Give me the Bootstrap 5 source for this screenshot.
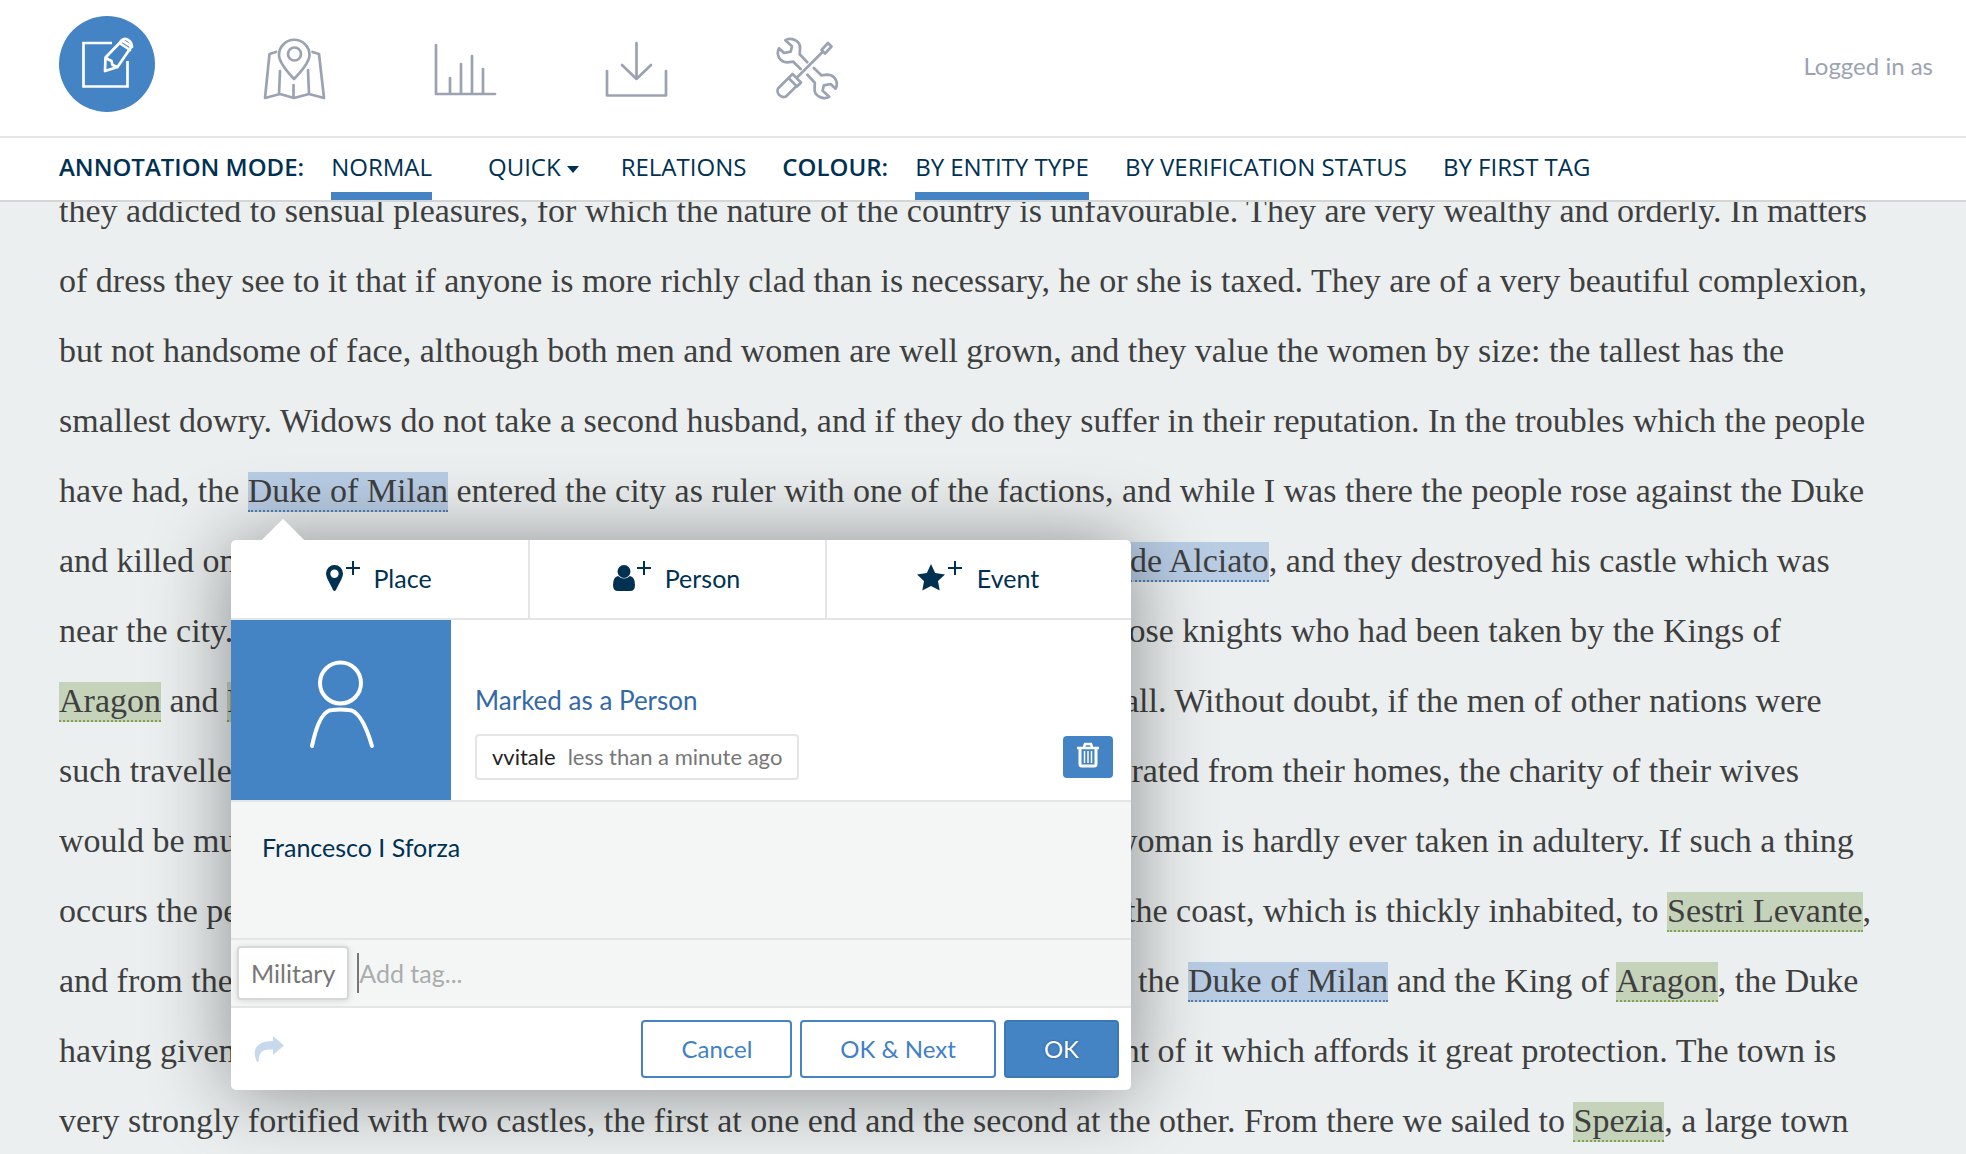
<!DOCTYPE html>
<html lang="en">
<head>
<meta charset="utf-8">
<meta name="viewport" content="width=device-width, initial-scale=1">
<title>Annotation editor</title>
<link href="https://cdn.jsdelivr.net/npm/bootstrap@5.3.0/dist/css/bootstrap.min.css" rel="stylesheet">
<style>
:root{--blue:#4483c4;--navy:#003152;--line:#e4e5e6;--soft:#f4f6f6;--icon:#9ba3b2}
body{font-family:Lato,"Open Sans",sans-serif;font-size:25px;line-height:36px;color:var(--navy)}
.topbar{padding:16px 33px 24px 59px;border-bottom:2px solid var(--line);background:#fff}
.topnav{gap:107px}
.topnav svg{display:block;overflow:visible;width:64px;height:64px;fill:none;stroke:var(--icon);stroke-width:2.7;stroke-linecap:round;stroke-linejoin:round}
.topnav .nav-link{padding:6px 0 0}
.topnav .current{width:96px;height:96px;padding:0;border-radius:50%;background:var(--blue)}
.topnav .current svg{stroke:#fff}
.whoami{color:var(--icon);font-size:24px;padding-top:4px}
.modebar{padding:0 59px;height:64px;border-bottom:2px solid #d4d6d6;background:#fff;font-family:"Open Sans",sans-serif;font-size:24px;line-height:32px}
.modes{gap:36px}
.modebar b{font-weight:600;padding-top:13px;margin-right:27px}
.modebar a,.modebar button{display:block;height:62px;padding:13px 0 17px;border:0;background:none;color:inherit;text-decoration:none;white-space:nowrap}
.modebar a.on{padding-bottom:9px;border-bottom:8px solid var(--blue)}
.modebar .quick{margin:0 6px 0 20px}
.quick::after{content:"";display:inline-block;margin-left:6px;vertical-align:3px;border:6px solid transparent;border-top:7px solid;border-bottom:0}
.reader{background:#ebeff0;color:#3f3f3f;font-family:"Liberation Serif","Times New Roman",serif;font-size:34px;line-height:70px}
.passage{margin:-26px 0 0 59px}
.passage p{margin:0;white-space:nowrap}
.passage p>i{display:inline-block;font-style:normal;overflow:hidden;vertical-align:top;height:70px}
.ent{padding-bottom:1px;border-bottom:2px dotted}
.person{background:#b8cce4;border-color:#5580ae}
.place{background:#c6d3bb;border-color:#83a352}
.editor{left:231px;top:338px;width:900px;border-radius:5px;background:#fff;box-shadow:0 2px 80px rgba(0,0,0,.42);font-family:Lato,"Open Sans",sans-serif;font-size:25px;line-height:36px;color:var(--navy)}
.editor::before{content:"";position:absolute;left:37px;top:-15px;width:30px;height:30px;background:#fff;transform:rotate(45deg)}
.kinds{position:relative;border-bottom:2px solid var(--line)}
.kinds button{width:33%;height:78px;border:0;background:none;color:inherit;padding:0 2px 2px 0}
.kinds button+button{border-left:2px solid var(--line)}
.kinds svg{width:48px;height:32px;fill:var(--navy);margin:-5px 0 0}
.portrait{width:220px;height:180px;padding-bottom:12px;background:var(--blue)}
.portrait svg{width:70px;height:92px;fill:none;stroke:#fff;stroke-width:4;stroke-linecap:round}
.entity{border-bottom:2px solid var(--line)}
.details{padding:0 18px 20px 24px}
.details h2{font-size:26px;line-height:36px;color:#3469a5;font-weight:400;margin:0 0 16px}
.stamp{border:2px solid var(--line);border-radius:4px;height:46px;padding:0 15px;font-size:22px;line-height:42px;color:#777;gap:12px}
.stamp a{color:#222;text-decoration:none}
.bin{width:50px;height:42px;margin-bottom:2px;border:0;border-radius:4px;background:var(--blue);padding:0}
.bin svg{display:block;margin:-4px auto 0;width:24px;height:26px;fill:none;stroke:#fff}
.note{height:138px;padding:27px 30px 0 31px;background:var(--soft);border-bottom:2px solid var(--line)}
.tags{height:68px;padding:0 6px;background:var(--soft);border-bottom:2px solid var(--line);gap:8px}
.tag-chip{height:54px;line-height:50px;padding:0 12px;background:#fff;border:2px solid #d6d8d8;border-radius:4px;color:#777;box-shadow:0 1px 6px rgba(0,0,0,.12)}
.tags input{height:40px;border:0;border-left:2px solid #777;background:none;padding:0;outline:0;line-height:40px;min-width:0}
.tags input::placeholder{color:#aaacae;opacity:1}
.actions{padding:12px;gap:8px}
.actions .btn{height:58px;padding:0 38px;font-size:24px;line-height:54px;border:2px solid var(--blue);border-radius:4px;color:#4280c6}
.actions .btn.solid{background:var(--blue);border-color:#3b78b6;color:#fff;text-shadow:0 0 2px #1b4878}
.reply{border:0;background:none;padding:0;margin-left:11px}
.reply svg{display:block;width:30px;height:28px;fill:#c8d9ed}
</style>
<script src="https://cdn.jsdelivr.net/npm/bootstrap@5.3.0/dist/js/bootstrap.bundle.min.js"></script>
</head>
<body class="vh-100 d-flex flex-column overflow-hidden">
<header class="topbar d-flex align-items-center justify-content-between">
  <nav class="topnav d-flex align-items-center" aria-label="Document">
    <a href="#" aria-label="Annotate" class="nav-link current d-flex align-items-center justify-content-center">
      <svg viewBox="0 0 64 64"><path stroke-linecap="butt" stroke-linejoin="miter" d="M37 11H8.500v43.500h44V29"/><path d="M47 8.500L56.500 14.500 42.500 35 30 39l.5-13.500zM30.500 26l6 3 1 4 5 2M44.500 11l10.500 7"/><path d="M46 9q3-3.500 7-1t4 7"/></svg></a>
    <a href="#" aria-label="Map" class="nav-link"><svg viewBox="0 0 64 64"><path d="M32 44Q17 28 17 20A15 15 0 0 1 47.500 20Q47.500 28 32 44z"/><circle cx="32.500" cy="19" r="6.500"/><path d="M14 17L7.500 19 3 63l15-4 14 4 15-4 15 4-5-44-6.500-2M18 36l-1 23M46 35l1 24M31.500 50v13"/></svg></a>
    <a href="#" aria-label="Statistics" class="nav-link"><svg viewBox="0 0 64 64"><path d="M3 10v49h59M17 43v15M28 29v29M39 21v37M50 34v24"/></svg></a>
    <a href="#" aria-label="Downloads" class="nav-link"><svg viewBox="0 0 64 64"><path d="M3 36v24.500h59V36M32.500 8v36M18 30l14.500 14L47 30"/></svg></a>
    <a href="#" aria-label="Settings" class="nav-link"><svg viewBox="0 0 64 64"><path d="M10.300 5.300C15 2 26 5 25 14l-.3 5.300 7.600 8M25.700 34l-7.400-7.300-6 .6C4 27 1 19 4 13.300l5 4.700 6.700-1.300L17 11.300 10.300 5.300"/><path transform="rotate(180 32.300 33.500)" d="M10.300 5.300C15 2 26 5 25 14l-.3 5.300 7.600 8M25.700 34l-7.400-7.300-6 .6C4 27 1 19 4 13.300l5 4.700 6.700-1.300L17 11.300 10.300 5.300"/><path d="M22 42.500L47 17.500M46.500 15l6.500-7 3.500 3.500-6.500 7zM17.500 39l8.500 8.500-4 4-8.500-8.500zM13.500 43L3 53.500c-2 5 3 10 8 8L21.500 51"/></svg></a>
  </nav>
  <span class="whoami">Logged in as</span>
</header>
<nav class="modebar d-flex" aria-label="Annotation options">
  <div class="modes d-flex">
    <div class="d-flex align-items-start"><b>ANNOTATION MODE:</b><a class="on" href="#">NORMAL</a></div>
    <button class="quick">QUICK</button>
    <a href="#">RELATIONS</a>
    <div class="d-flex align-items-start"><b>COLOUR:</b><a class="on" href="#">BY ENTITY TYPE</a></div>
    <a href="#">BY VERIFICATION STATUS</a>
    <a href="#">BY FIRST TAG</a>
  </div>
</nav>
<main class="reader flex-grow-1 position-relative overflow-hidden">
  <article class="passage">
    <p>they addicted to sensual pleasures, for which the nature of the country is unfavourable. They are very wealthy and orderly. In matters</p>
    <p>of dress they see to it that if anyone is more richly clad than is necessary, he or she is taxed. They are of a very beautiful complexion,</p>
    <p>but not handsome of face, although both men and women are well grown, and they value the women by size: the tallest has the</p>
    <p>smallest dowry. Widows do not take a second husband, and if they do they suffer in their reputation. In the troubles which the people</p>
    <p>have had, the <span class="ent person">Duke of Milan</span> entered the city as ruler with one of the factions, and while I was there the people rose against the Duke</p>
    <p><i style="width:1071px">and killed one</i><span class="ent person">de Alciato</span>, and they destroyed his castle which was</p>
    <p><i style="width:1043px">near the city.</i>those knights who had been taken by the Kings of</p>
    <p><i style="width:1065px"><span class="ent place">Aragon</span> and <span class="ent place">Naples</span></i>all. Without doubt, if the men of other nations were</p>
    <p><i style="width:1012px">such travellers</i>separated from their homes, the charity of their wives</p>
    <p><i style="width:1054px">would be much</i>woman is hardly ever taken in adultery. If such a thing</p>
    <p><i style="width:1067px">occurs the people</i>the coast, which is thickly inhabited, to <span class="ent place">Sestri Levante</span>,</p>
    <p><i style="width:1079px">and from the</i>the <span class="ent person">Duke of Milan</span> and the King of <span class="ent place">Aragon</span>, the Duke</p>
    <p><i style="width:1024px">having given</i>front of it which affords it great protection. The town is</p>
    <p>very strongly fortified with two castles, the first at one end and the second at the other. From there we sailed to <span class="ent place">Spezia</span>, a large town</p>
  </article>
  <section class="editor position-absolute" aria-label="Annotation">
    <div class="kinds d-flex">
      <button class="d-flex align-items-center justify-content-center"><svg viewBox="0 0 48 32"><path fill-rule="evenodd" d="M9.500 5A8.500 8.500 0 0 0 1 13.500C1 18 6 25 8 30q1.500 2 3 0C13 25 18 18 18 13.500A8.500 8.500 0 0 0 9.500 5zm0 4.500a4.200 4.200 0 1 1 0 8.400a4.200 4.200 0 1 1 0-8.400z"/><path d="M21 7h6V1h2v6h6v2h-6v6h-2V9h-6z"/></svg>Place</button>
      <button class="d-flex align-items-center justify-content-center"><svg viewBox="0 0 52 32" style="width:52px"><circle cx="11" cy="11.500" r="6.500"/><path d="M5 16q6 5 12 0 5 1 5 9 0 6-5 6H5q-5 0-5-6 0-8 5-9zM24 7h6V1h2v6h6v2h-6v6h-2V9h-6z"/></svg>Person</button>
      <button class="flex-grow-1 d-flex align-items-center justify-content-center"><svg viewBox="0 0 60 32" style="width:60px"><path d="M14 4l4.200 9L28 14.500l-7 6.500 1.700 9.500L14 26l-8.700 4.500L7 21 0 14.500 9.800 13z"/><path d="M31 7h6V1h2v6h6v2h-6v6h-2V9h-6z"/></svg>Event</button>
    </div>
    <div class="entity d-flex">
      <div class="portrait d-flex align-items-center justify-content-center"><svg viewBox="0 0 70 92"><circle cx="34.500" cy="25" r="20.500"/><path d="M6 88Q13.500 52 26.500 52q8-1 16 0 13 0 23.500 36"/></svg></div>
      <div class="details flex-grow-1 d-flex align-items-end justify-content-between">
        <div><h2>Marked as a Person</h2><div class="stamp d-flex"><a href="#">vvitale</a><span>less than a minute ago</span></div></div>
        <button class="bin" aria-label="Delete"><svg viewBox="0 0 24 26"><path stroke-width="3" d="M4 6v16q0 2 2 2h12q2 0 2-2V6"/><path stroke-width="2.500" d="M1 6h22M8 5l1-3h6l1 3"/><path stroke-width="1.500" d="M8.500 9v12M12 9v12M15.500 9v12"/></svg></button>
      </div>
    </div>
    <div class="note">Francesco I Sforza</div>
    <div class="tags d-flex align-items-center"><span class="tag-chip">Military</span><input class="flex-grow-1" type="text" placeholder="Add tag..." aria-label="Add tag"></div>
    <div class="actions d-flex align-items-center">
      <button class="reply me-auto" aria-label="Reply"><svg viewBox="0 0 30 28"><path d="M19 1l11 9.500L19 20v-5.500C9 14 5 16 4.500 27H3C-3 14 3 6 19 6z"/></svg></button>
      <button class="btn">Cancel</button><button class="btn">OK &amp; Next</button><button class="btn solid">OK</button>
    </div>
  </section>
</main>
</body>
</html>
